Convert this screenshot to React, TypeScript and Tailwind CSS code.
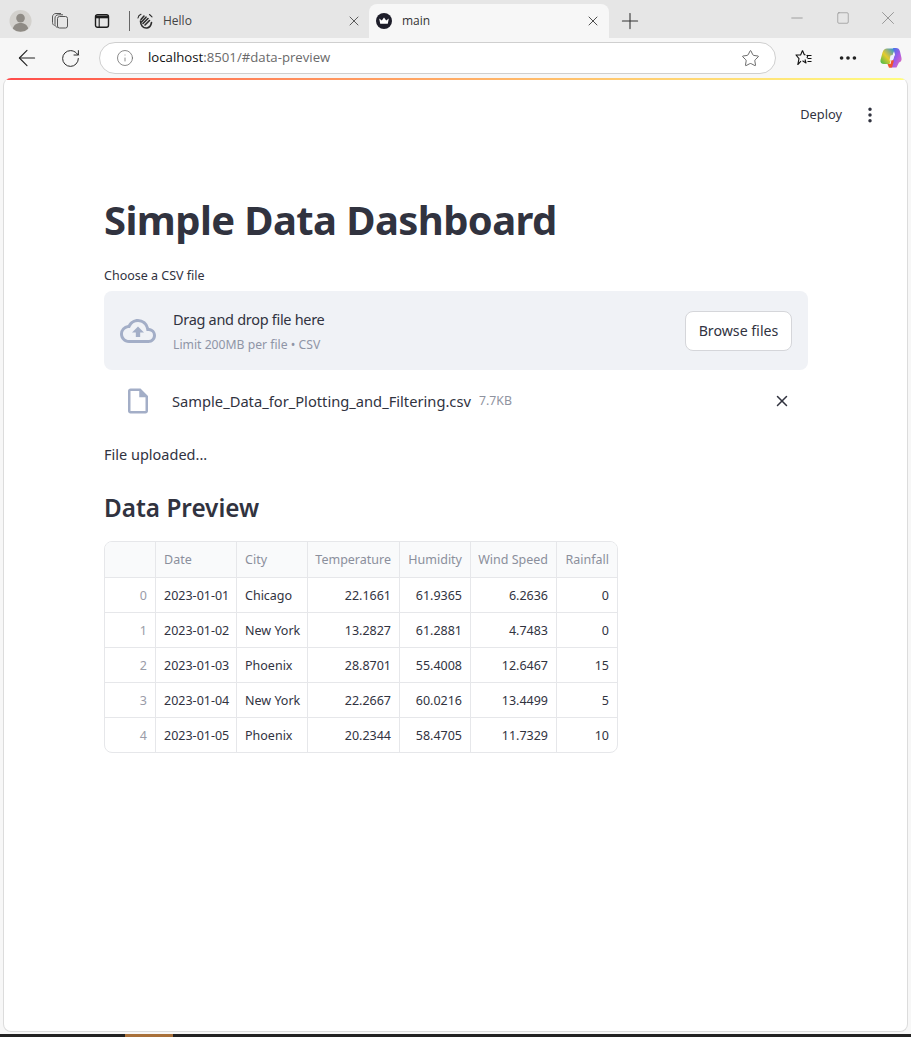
import React from "react";
import { ArrowLeft, RotateCw, Info, Star, Plus, X, Minus, Square, MoreHorizontal, MoreVertical } from "lucide-react";

const ui = "font-['Open_Sans','Noto_Sans',sans-serif]";
const st = "font-['Noto_Sans','Open_Sans',sans-serif]";

const rows = [
  ["0", "2023-01-01", "Chicago", "22.1661", "61.9365", "6.2636", "0"],
  ["1", "2023-01-02", "New York", "13.2827", "61.2881", "4.7483", "0"],
  ["2", "2023-01-03", "Phoenix", "28.8701", "55.4008", "12.6467", "15"],
  ["3", "2023-01-04", "New York", "22.2667", "60.0216", "13.4499", "5"],
  ["4", "2023-01-05", "Phoenix", "20.2344", "58.4705", "11.7329", "10"],
];
const headers = ["", "Date", "City", "Temperature", "Humidity", "Wind Speed", "Rainfall"];

function Profile() {
  return (
    <svg width="24" height="24" viewBox="0 0 24 24">
      <circle cx="12" cy="12" r="11.5" fill="#d3d1cd" />
      <circle cx="12" cy="9" r="4.5" fill="#8f8b85" />
      <path d="M4 20c1-4.5 4.5-6 8-6s7 1.5 8 6a11.5 11.5 0 0 1-16 0z" fill="#8f8b85" />
    </svg>
  );
}

function Workspaces() {
  return (
    <svg width="18" height="18" viewBox="0 0 18 18" fill="none" stroke="#555" strokeWidth="1">
      <rect x="6.5" y="4.5" width="10" height="11.5" rx="2" />
      <path d="M6.5 15.5C5 15 4 14 4 12.5V6C4 4 5.5 2.8 7.5 2.8H12" />
      <path d="M3.5 13.5C2.2 13 1.5 12 1.5 10.5V5C1.5 3 3 1.5 5 1.5H10" />
    </svg>
  );
}

function TabPanel() {
  return (
    <svg width="16" height="16" viewBox="0 0 16 16" fill="none" stroke="#1c1c1c" strokeWidth="1.4">
      <rect x="1.5" y="1.7" width="13" height="12.6" rx="2" />
      <path d="M1.5 4h13" strokeWidth="2.6" />
      <path d="M5.2 4.5v9.8" strokeWidth="1.1" />
    </svg>
  );
}

function HandIcon() {
  return (
    <svg width="17" height="17" viewBox="0 0 17 17" fill="none" stroke="#2c2c2c" strokeWidth="1.6" strokeLinecap="round">
      <path d="M4 6.5 7 3M4.5 9 9 4.2M6 10.5 11 5.5M8 12 12.5 7.5" />
      <path d="M3.5 8C3.5 12 6 15.5 10 15 12.5 14.6 14 12.5 14.5 9.5" />
      <path d="M1 5C1.3 3.2 2.3 2 4 1.3M12.5 1.5 15 3.8" strokeWidth="1.1" />
    </svg>
  );
}

function CrownFavicon() {
  return (
    <svg width="16" height="16" viewBox="0 0 16 16">
      <circle cx="8" cy="8" r="8" fill="#1e1e2a" />
      <path d="M3.2 5.6 5.8 7.6 8 4.4 10.2 7.6 12.8 5.6 11.8 10.8H4.2z" fill="#fff" />
    </svg>
  );
}

function FavList() {
  return (
    <svg width="18" height="18" viewBox="0 0 18 18" fill="none" stroke="#111" strokeWidth="1.1" strokeLinejoin="round">
      <path d="M7.5 1.5 9.3 5.8H10.5M12 9 13 6M6 12.2 2.8 15.5 4 9.6 1 6H5.6L7.5 1.5M10 10.5 11 14 7.5 11.8" />
      <path d="M11.5 6.5h5M12.5 9.5h4M12.5 12.5h4" />
    </svg>
  );
}

function Copilot() {
  return (
    <svg width="22" height="22" viewBox="0 0 22 22">
      <defs>
        <linearGradient id="cpA" x1="0" y1="1" x2="1" y2="0">
          <stop offset="0" stopColor="#3cb84f" />
          <stop offset="0.45" stopColor="#e6cb2c" />
          <stop offset="1" stopColor="#1f8fe8" />
        </linearGradient>
        <linearGradient id="cpB" x1="0" y1="0" x2="1" y2="1">
          <stop offset="0" stopColor="#1f7fe8" />
          <stop offset="0.55" stopColor="#a35be8" />
          <stop offset="1" stopColor="#f272b0" />
        </linearGradient>
      </defs>
      <path d="M7 1.5h8L11.5 11 9.5 17H4C1.5 17 0 15.5.5 13L2.5 5.5C3.2 3 5 1.5 7 1.5z" fill="url(#cpA)" />
      <path d="M13 1h3c2 0 3.5 1 4 3.5L21.5 11c.5 2.5-.8 4-2.5 4.5L16.5 20.5H10l5-13z" fill="url(#cpB)" />
      <path d="M7.5 17H10.5L11.5 13 14 13.5 12 20.5 9 20.8z" fill="#f0562e" />
      <path d="M10.5 8.5 14.5 7.5 13 13 9.5 13.5z" fill="#eef" />
    </svg>
  );
}

function UploadCloud() {
  return (
    <svg width="36" height="36" viewBox="0 0 24 24" fill="#a3aec7">
      <path d="M19.35 10.04A7.49 7.49 0 0 0 12 4C9.11 4 6.6 5.64 5.35 8.04A5.994 5.994 0 0 0 0 14c0 3.31 2.69 6 6 6h13c2.76 0 5-2.24 5-5 0-2.64-2.05-4.78-4.65-4.96zM19 18H6c-2.21 0-4-1.79-4-4 0-2.05 1.53-3.76 3.56-3.97l1.07-.11.5-.95A5.469 5.469 0 0 1 12 6c2.62 0 4.88 1.86 5.39 4.43l.3 1.5 1.53.11A2.98 2.98 0 0 1 22 15c0 1.65-1.35 3-3 3zM8 13h2.55v3h2.9v-3H16l-4-4z" />
    </svg>
  );
}

function FileIcon() {
  return (
    <svg width="30" height="30" viewBox="0 0 24 24" fill="#a3aec7">
      <path d="M14 2H6c-1.1 0-1.99.9-1.99 2L4 20c0 1.1.89 2 1.99 2H18c1.1 0 2-.9 2-2V8l-6-6zM6 20V4h7v5h5v11H6z" />
    </svg>
  );
}

function BrowserChrome() {
  return (
    <div className={ui}>
      <div className="flex h-[38px] bg-[#e6e6e6]">
        <div className="flex w-[130px] items-center pl-[9px] pt-[4px]">
          <Profile />
          <div className="ml-[19px]"><Workspaces /></div>
          <div className="ml-[25px]"><TabPanel /></div>
          <div className="ml-[19px] h-[20px] w-px bg-[#666]" />
        </div>
        <div className="flex w-[239px] items-center pl-[7px] pr-[7px] pt-[4px]">
          <HandIcon />
          <span className="ml-[9px] flex-1 text-[12px] text-[#444]">Hello</span>
          <X size={16} strokeWidth={1.3} color="#444" />
        </div>
        <div className="mt-[4px] flex w-[240px] items-center rounded-t-[8px] bg-[#f7f7f7] pl-[7px] pr-[8px]">
          <CrownFavicon />
          <span className="ml-[10px] flex-1 text-[12px] text-[#333]">main</span>
          <X size={16} strokeWidth={1.3} color="#333" />
        </div>
        <div className="ml-[8px] flex items-center pt-[4px]">
          <Plus size={26} strokeWidth={1} color="#333" />
        </div>
        <div className="ml-auto flex text-[#888]">
          <div className="flex h-[36px] w-[45.5px] items-center justify-center"><Minus size={18} strokeWidth={1} /></div>
          <div className="flex h-[36px] w-[45.5px] items-center justify-center"><Square size={14} strokeWidth={1.1} /></div>
          <div className="flex h-[36px] w-[45.5px] items-center justify-center"><X size={22} strokeWidth={0.9} /></div>
        </div>
      </div>
      <div className="flex h-[40px] items-center bg-[#f7f7f7]">
        <ArrowLeft size={26} strokeWidth={1} color="#222" className="ml-[14px]" />
        <RotateCw size={21} strokeWidth={1.1} color="#222" className="ml-[20px]" />
        <div className="ml-[18px] flex h-[32px] w-[677px] items-center rounded-full border border-[#cfcfcf] bg-white pl-[16px] pr-[15px]">
          <Info size={18} strokeWidth={1} color="#666" />
          <span className="ml-[14px] flex-1 text-[13.2px] text-[#6a6a6a]">
            <span className="text-[#111]">localhost</span>:8501/#data-preview
          </span>
          <Star size={19} strokeWidth={1} color="#444" />
        </div>
        <div className="ml-[19px]"><FavList /></div>
        <MoreHorizontal size={22} strokeWidth={2} color="#222" className="ml-[24px]" />
        <div className="ml-[21px]"><Copilot /></div>
      </div>
    </div>
  );
}

function DataTable() {
  return (
    <div className="grid w-[514px] grid-cols-[51px_81px_71px_92px_71px_86px_60px] overflow-hidden rounded-[8px] border border-[#e6e7ea] text-[12.5px]">
      {headers.map((h, i) => (
        <div
          key={h || "idx"}
          className={`flex h-[36px] items-center border-b border-[#e6e7ea] bg-[#f9fafb] pt-[2px] text-[#8b8f9c] ${
            i < 6 ? "border-r" : ""
          } ${i >= 3 ? "justify-end pr-2" : "pl-2"}`}
        >
          {h}
        </div>
      ))}
      {rows.map((row, r) =>
        row.map((c, i) => (
          <div
            key={`${r}-${i}`}
            className={`flex items-center border-[#e6e7ea] pt-[2px] ${i < 6 ? "border-r" : ""} ${
              r < 4 ? "h-[35px] border-b" : "h-[34px]"
            } ${i === 0 ? "justify-end pr-2 text-[#9a9ca8]" : i >= 3 ? "justify-end pr-2 text-[#31333f]" : "pl-2 text-[#31333f]"}`}
          >
            {c}
          </div>
        ))
      )}
    </div>
  );
}

export default function App() {
  return (
    <div className="flex h-[1037px] flex-col overflow-hidden bg-[#f7f7f7]">
      <BrowserChrome />
      <div className="mx-[3px] flex h-[954px] flex-col overflow-hidden rounded-[8px] border-x border-b border-[#dcdcdc] bg-white">
        <div className="h-[2px] shrink-0 bg-gradient-to-r from-[#ff4b4b] to-[#fffd80]" />
        <div className={`flex flex-1 flex-col text-[#31333f] ${st}`}>
          <div className="flex items-center justify-end pt-[25px] pr-[27px] text-[12.8px]">
            <span>Deploy</span>
            <MoreVertical size={20} strokeWidth={2.2} className="ml-[18px]" />
          </div>
          <div className="flex flex-col pl-[100px]">
            <h1 className="mt-[67px] text-[40px] font-bold leading-[56px] tracking-[-0.6px]">Simple Data Dashboard</h1>
            <p className="mt-[18px] text-[12.5px] leading-[20px]">Choose a CSV file</p>
            <div className="mt-[5px] flex h-[79px] w-[704px] items-center rounded-[8px] bg-[#f0f2f6] pl-[16px] pr-4">
              <UploadCloud />
              <div className="ml-[17px] flex-1">
                <div className="text-[14.5px] leading-[20px] tracking-[-0.3px]">Drag and drop file here</div>
                <div className="mt-[8px] text-[12.2px] leading-[16px] text-[#8f95a6]">Limit 200MB per file • CSV</div>
              </div>
              <button className="flex h-[40px] w-[107px] items-center justify-center rounded-[8px] border border-[#d5d6da] bg-white text-[14.2px]">
                Browse files
              </button>
            </div>
            <div className="mt-[15px] flex h-[32px] w-[704px] items-center pl-[19px] pr-[17px]">
              <FileIcon />
              <span className="ml-[19px] text-[14.7px]">Sample_Data_for_Plotting_and_Filtering.csv</span>
              <span className="ml-[8px] flex-1 text-[12.3px] text-[#8f93a0]">7.7KB</span>
              <X size={18} strokeWidth={2} />
            </div>
            <p className="mt-[25px] text-[14.5px] leading-[24px]">File uploaded...</p>
            <h2 className="mt-[24px] text-[24.3px] font-semibold leading-[36px]">Data Preview</h2>
            <div className="mt-[15px]"><DataTable /></div>
          </div>
        </div>
      </div>
      <div className="mt-auto flex h-[3px] bg-[#222]">
        <div className="ml-[125px] w-[48px] bg-[#a8703a]" />
      </div>
    </div>
  );
}
